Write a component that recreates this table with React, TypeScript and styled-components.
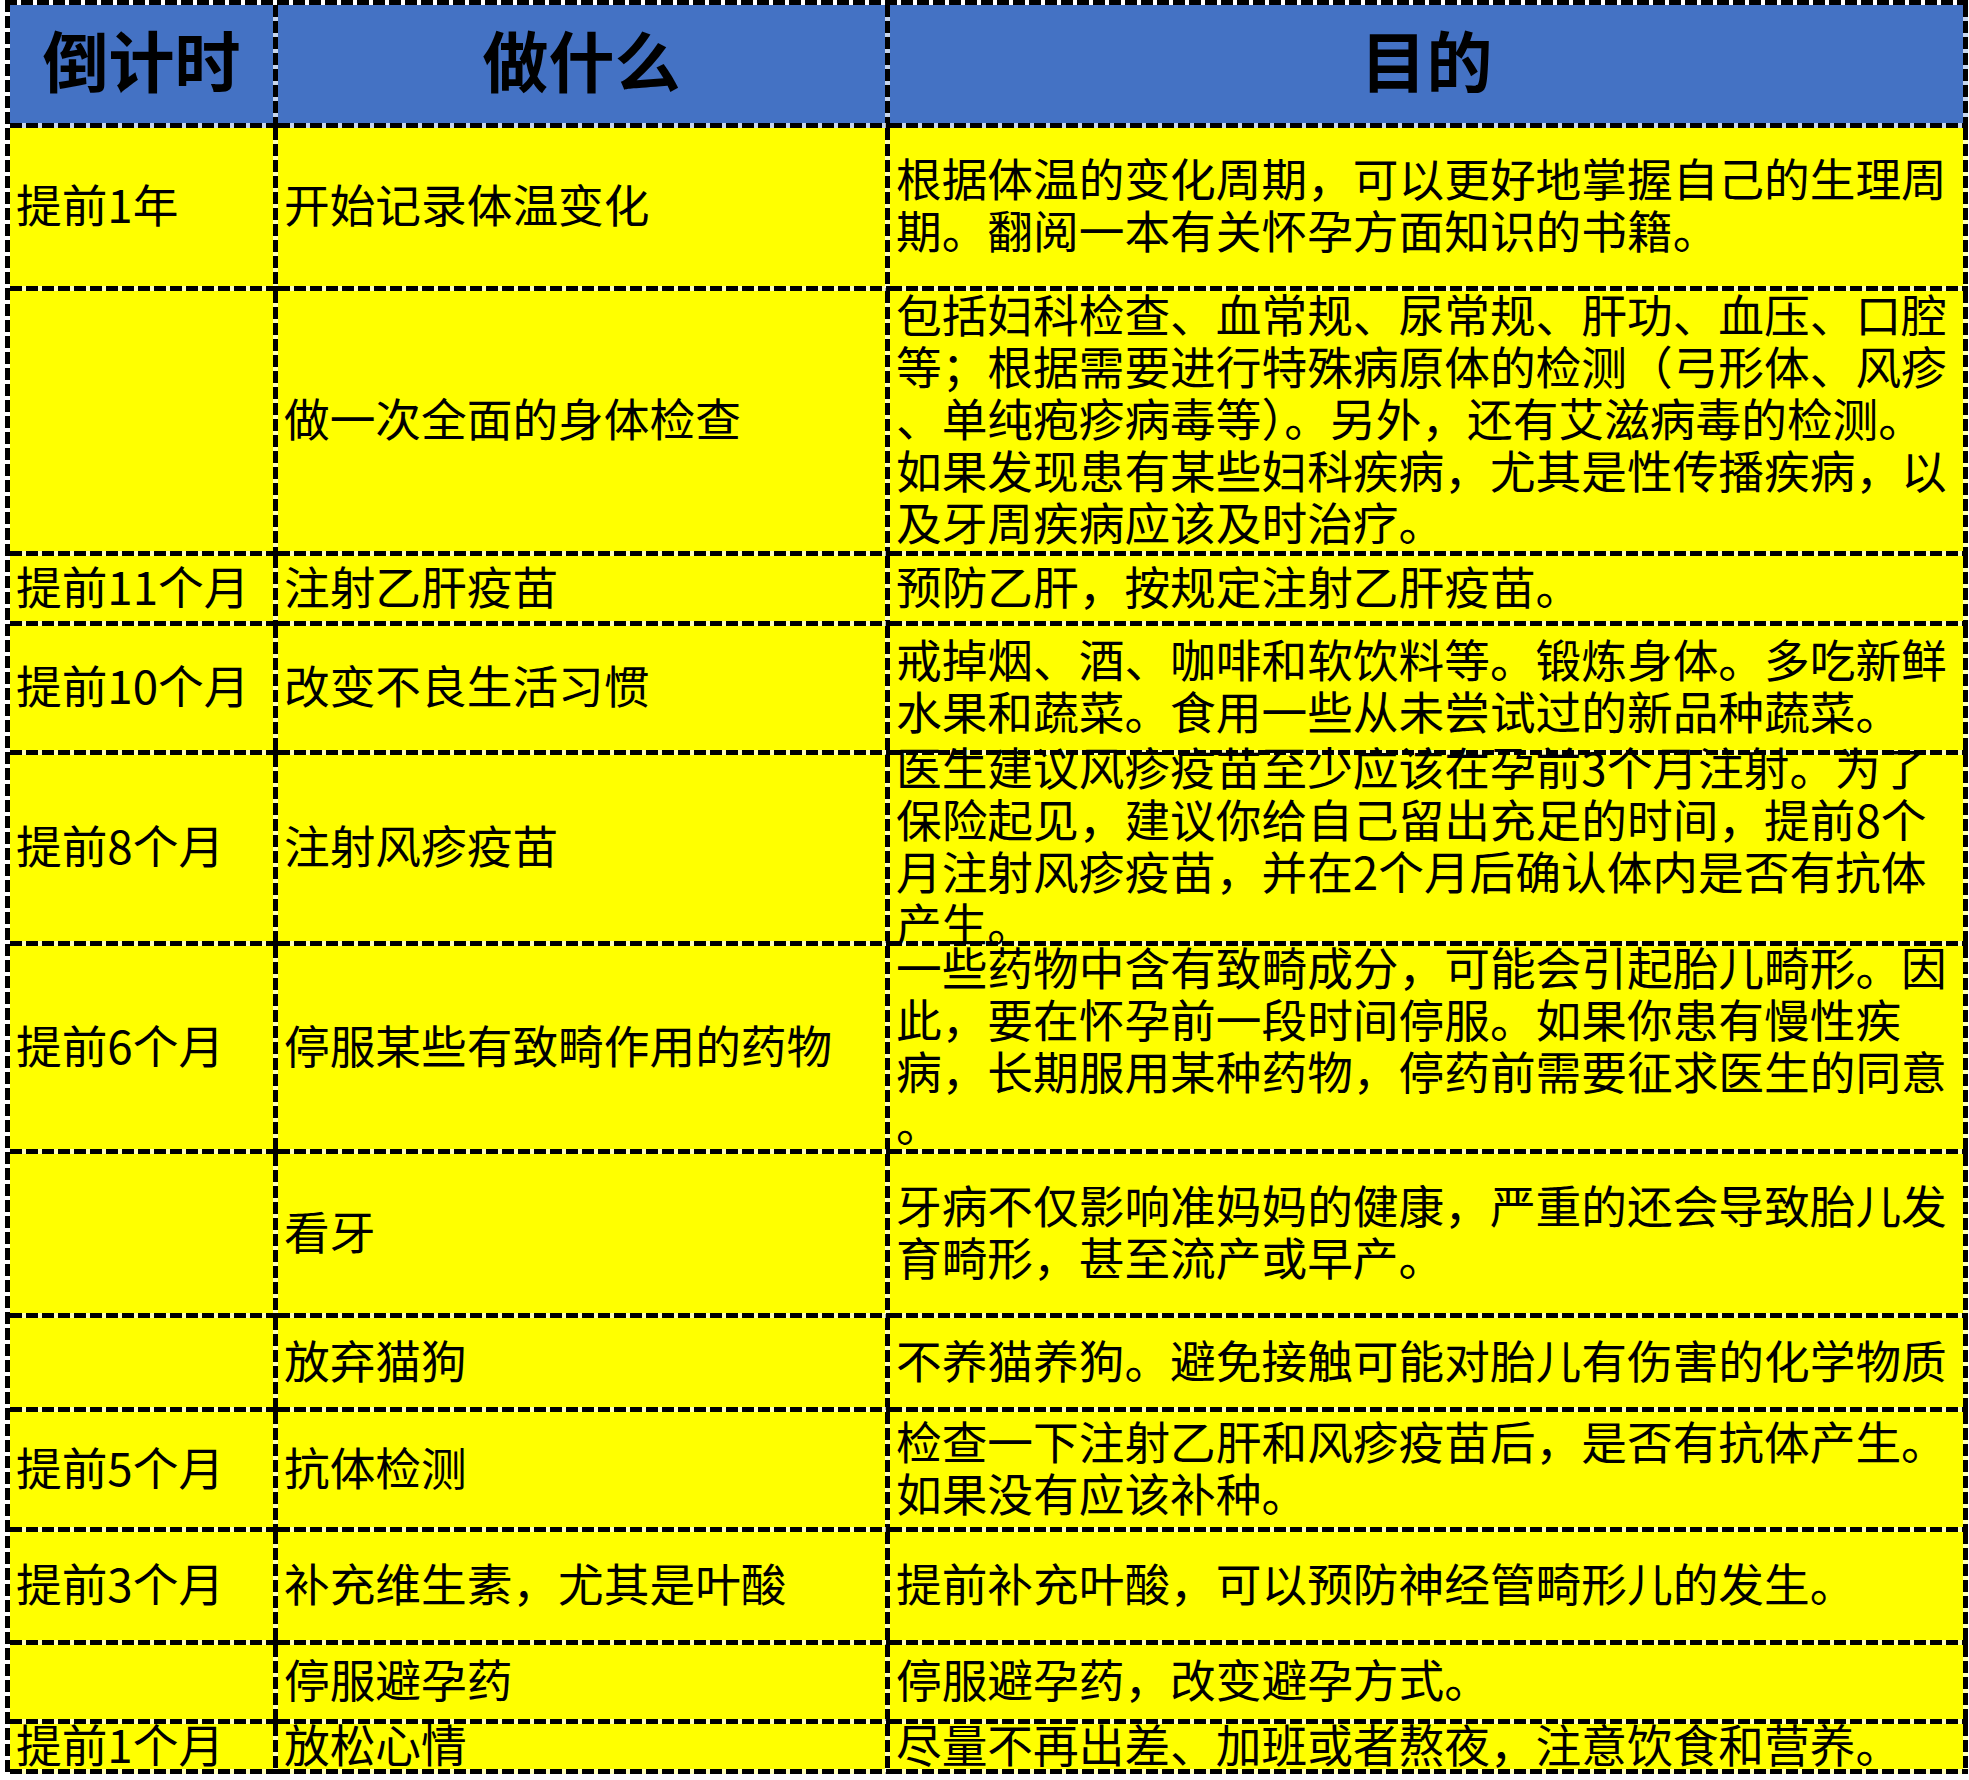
import React from "react";
import styled, { createGlobalStyle, css } from "styled-components";

const GlobalStyle = createGlobalStyle`
  html, body {
    margin: 0;
    padding: 0;
    background: #ffffff;
  }
  body {
    font-family: "Noto Sans CJK SC", "Noto Sans", sans-serif;
    color: #000000;
  }
`;

const B = 5;
const GAP = "rgba(255,255,255,0.7)";
const hDash = `repeating-linear-gradient(to right, #000 0 12px, ${GAP} 12px 16px)`;
const vDash = `repeating-linear-gradient(to bottom, #000 0 12px, ${GAP} 12px 16px)`;

const Table = styled.div`
  margin-left: 5px;
  width: ${268 + 612 + 1078 + B}px;
  padding: ${B}px 0 0 ${B}px;
  box-sizing: border-box;
  background:
    ${hDash} left top / 100% ${B}px no-repeat,
    ${vDash} left top / ${B}px 100% no-repeat;
`;

const Row = styled.div<{ $h: number; $head?: boolean }>`
  display: grid;
  grid-template-columns: 268px 612px 1078px;
  grid-template-rows: minmax(0, 1fr);
  height: ${(p) => p.$h}px;
  background: ${(p) => (p.$head ? "#4472C4" : "#FFFF00")};
`;

const Cell = styled.div<{ $head?: boolean }>`
  box-sizing: border-box;
  display: flex;
  flex-direction: column;
  justify-content: center;
  min-width: 0;
  min-height: 0;
  height: 100%;
  padding: 0 ${B}px 13px 6px;
  background:
    ${hDash} left bottom / 100% ${B}px no-repeat,
    ${vDash} right top / ${B}px 100% no-repeat;
  font-size: 45.7px;
  line-height: 52px;
  ${(p) =>
    p.$head &&
    css`
      align-items: center;
      padding: 0 ${B}px 17px 0;
      font-size: 66px;
      font-weight: 700;
      line-height: 80px;
    `}
`;

const Line = styled.span`
  display: block;
  white-space: nowrap;
`;

type RowData = { h: number; when: string; what: string; why: string[] };

const rows: RowData[] = [
  {
    h: 163,
    when: "提前1年",
    what: "开始记录体温变化",
    why: ["根据体温的变化周期，可以更好地掌握自己的生理周", "期。翻阅一本有关怀孕方面知识的书籍。"],
  },
  {
    h: 265,
    when: "",
    what: "做一次全面的身体检查",
    why: [
      "包括妇科检查、血常规、尿常规、肝功、血压、口腔",
      "等；根据需要进行特殊病原体的检测（弓形体、风疹",
      "、单纯疱疹病毒等）。另外，还有艾滋病毒的检测。",
      "如果发现患有某些妇科疾病，尤其是性传播疾病，以",
      "及牙周疾病应该及时治疗。",
    ],
  },
  { h: 70, when: "提前11个月", what: "注射乙肝疫苗", why: ["预防乙肝，按规定注射乙肝疫苗。"] },
  {
    h: 129,
    when: "提前10个月",
    what: "改变不良生活习惯",
    why: ["戒掉烟、酒、咖啡和软饮料等。锻炼身体。多吃新鲜", "水果和蔬菜。食用一些从未尝试过的新品种蔬菜。"],
  },
  {
    h: 191,
    when: "提前8个月",
    what: "注射风疹疫苗",
    why: [
      "医生建议风疹疫苗至少应该在孕前3个月注射。为了",
      "保险起见，建议你给自己留出充足的时间，提前8个",
      "月注射风疹疫苗，并在2个月后确认体内是否有抗体",
      "产生。",
    ],
  },
  {
    h: 208,
    when: "提前6个月",
    what: "停服某些有致畸作用的药物",
    why: [
      "一些药物中含有致畸成分，可能会引起胎儿畸形。因",
      "此，要在怀孕前一段时间停服。如果你患有慢性疾",
      "病，长期服用某种药物，停药前需要征求医生的同意",
      "。",
    ],
  },
  {
    h: 164,
    when: "",
    what: "看牙",
    why: ["牙病不仅影响准妈妈的健康，严重的还会导致胎儿发", "育畸形，甚至流产或早产。"],
  },
  { h: 94, when: "", what: "放弃猫狗", why: ["不养猫养狗。避免接触可能对胎儿有伤害的化学物质"] },
  {
    h: 120,
    when: "提前5个月",
    what: "抗体检测",
    why: ["检查一下注射乙肝和风疹疫苗后，是否有抗体产生。", "如果没有应该补种。"],
  },
  { h: 113, when: "提前3个月", what: "补充维生素，尤其是叶酸", why: ["提前补充叶酸，可以预防神经管畸形儿的发生。"] },
  { h: 79, when: "", what: "停服避孕药", why: ["停服避孕药，改变避孕方式。"] },
  { h: 50, when: "提前1个月", what: "放松心情", why: ["尽量不再出差、加班或者熬夜，注意饮食和营养。"] },
];

export default function App() {
  return (
    <>
      <GlobalStyle />
      <Table>
        <Row $h={123} $head>
          <Cell $head>倒计时</Cell>
          <Cell $head>做什么</Cell>
          <Cell $head>目的</Cell>
        </Row>
        {rows.map((r, i) => (
          <Row key={i} $h={r.h}>
            <Cell>
              <Line>{r.when}</Line>
            </Cell>
            <Cell>
              <Line>{r.what}</Line>
            </Cell>
            <Cell>
              {r.why.map((l, j) => (
                <Line key={j}>{l}</Line>
              ))}
            </Cell>
          </Row>
        ))}
      </Table>
    </>
  );
}
